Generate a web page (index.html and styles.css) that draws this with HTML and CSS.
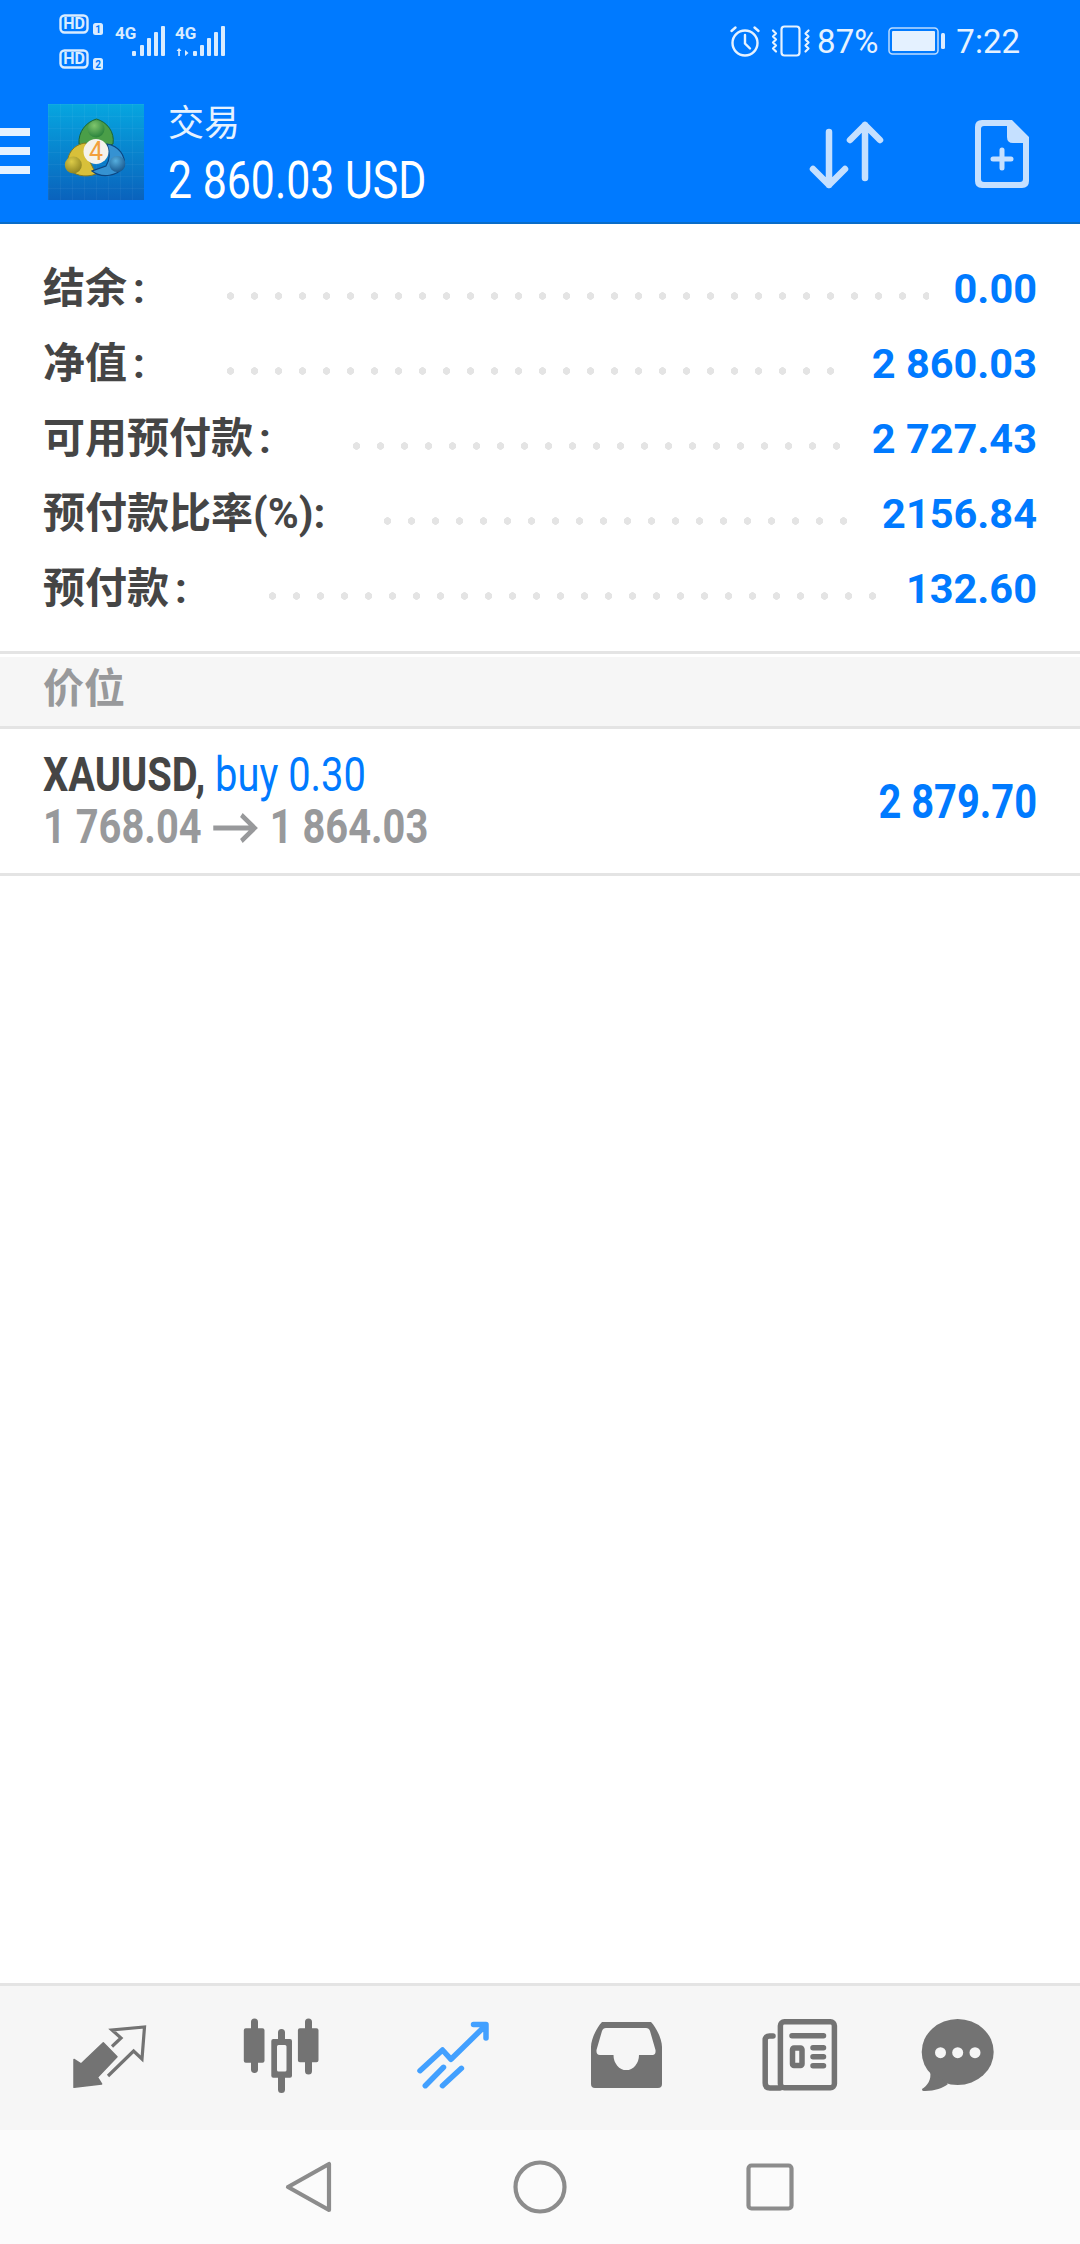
FILE: index.html
```html
<!DOCTYPE html>
<html lang="zh-CN">
<head>
    <meta charset="UTF-8">
    <meta name="viewport" content="width=device-width, initial-scale=1.0">
    <title>交易</title>
    <link rel="stylesheet" href="styles.css">
</head>
<body>

<header class="top">
    <div class="status">
        <svg class="status-left" viewBox="0 0 240 72" width="240" height="72">
            <g fill="none" stroke="#d9ecff" stroke-width="2.4">
                <rect x="60.5" y="15.5" width="27" height="17" rx="4"/>
                <rect x="60.5" y="50.5" width="27" height="17" rx="4"/>
            </g>
            <g fill="#d9ecff">
                <text class="hd" x="74" y="29" text-anchor="middle">HD</text>
                <text class="hd" x="74" y="64" text-anchor="middle">HD</text>
                <rect x="93" y="23" width="10" height="12" rx="2.5"/>
                <rect x="93" y="58" width="10" height="12" rx="2.5"/>
                <text class="net" x="115" y="39">4G</text>
                <text class="net" x="175" y="39">4G</text>
                <rect x="132" y="51" width="4" height="5" rx="1"/>
                <rect x="140" y="45" width="4" height="11" rx="1"/>
                <rect x="147" y="38" width="4" height="18" rx="1"/>
                <rect x="154" y="32" width="4" height="24" rx="1"/>
                <rect x="161" y="26" width="4" height="30" rx="1"/>
                <path d="M179 48l-2.500 3h1.700v5h1.700v-5h1.600zM185 56l3.500-3-3.500-3z"/>
                <rect x="193" y="51" width="4" height="5" rx="1"/>
                <rect x="200" y="45" width="4" height="11" rx="1"/>
                <rect x="207" y="38" width="4" height="18" rx="1"/>
                <rect x="214" y="32" width="4" height="24" rx="1"/>
                <rect x="221" y="26" width="4" height="30" rx="1"/>
            </g>
            <g fill="#007aff">
                <text class="sim" x="98" y="33" text-anchor="middle">1</text>
                <text class="sim" x="98" y="68" text-anchor="middle">2</text>
            </g>
        </svg>
        <div class="status-right">
            <svg viewBox="0 0 32 32" width="32" height="32" fill="none" stroke="#e6f2ff" stroke-width="2.400" stroke-linecap="round">
                <circle cx="16" cy="18" r="12.500"/>
                <path d="M16 10v8.500l5 5M2.500 6l4-3.500M29.500 6l-4-3.500"/>
            </svg>
            <svg class="vib" viewBox="0 0 42 32" width="42" height="32" fill="none" stroke="#e6f2ff" stroke-width="2.200" stroke-linecap="round" stroke-linejoin="round">
                <rect x="11.500" y="1.500" width="18" height="29" rx="3"/>
                <path d="M3 5.500l3 3-3 3 3 3-3 3 3 3-3 3 3 3M38.500 5.500l-3 3 3 3-3 3 3 3-3 3 3 3-3 3"/>
            </svg>
            <span class="pct">87%</span>
            <svg class="batt" viewBox="0 0 58 28" width="58" height="28">
                <rect x="1" y="1" width="49" height="26" rx="3.500" fill="none" stroke="#bcdcff" stroke-width="1.500"/>
                <rect x="4" y="4" width="43" height="20" rx="1" fill="#e4f1ff"/>
                <rect x="53" y="6" width="4" height="16" rx="1.500" fill="#dcecff"/>
            </svg>
            <span class="clock">7:22</span>
        </div>
    </div>
    <div class="appbar">
        <div class="burger"><i></i><i></i><i></i></div>
        <svg class="logo" viewBox="0 0 96 96" width="96" height="96">
            <defs>
                <linearGradient id="sky" x1="0" y1="0" x2="0" y2="1">
                    <stop offset="0" stop-color="#06a6e0"/>
                    <stop offset="1" stop-color="#0a62bc"/>
                </linearGradient>
                <pattern id="mesh" width="12" height="12" patternUnits="userSpaceOnUse">
                    <path d="M12 0H0V12" fill="none" stroke="#ffffff" stroke-opacity=".08"/>
                </pattern>
                <radialGradient id="bulbGreen" cx=".4" cy=".3" r=".8">
                    <stop offset="0" stop-color="#7fc56c"/>
                    <stop offset="1" stop-color="#1f7a36"/>
                </radialGradient>
                <radialGradient id="bulbYellow" cx=".4" cy=".3" r=".8">
                    <stop offset="0" stop-color="#dccb48"/>
                    <stop offset="1" stop-color="#877c1c"/>
                </radialGradient>
                <radialGradient id="bulbBlue" cx=".4" cy=".3" r=".8">
                    <stop offset="0" stop-color="#56aede"/>
                    <stop offset="1" stop-color="#124f86"/>
                </radialGradient>
            </defs>
            <rect width="96" height="96" fill="url(#sky)"/>
            <rect width="96" height="96" fill="url(#mesh)"/>
            <path d="M31 40C30 28 38 18 48.500 15 59 18 67 28 65 40L48 46Z" fill="#4a9e48" stroke="#1b6535" stroke-width="1"/>
            <circle cx="48" cy="25" r="8.500" fill="url(#bulbGreen)"/>
            <path d="M38 39C26 40 18 50 20 62 24 72 38 74 48 70L42 58Z" fill="#d8c03a" stroke="#85791e" stroke-width="1"/>
            <circle cx="25.300" cy="61" r="8.500" fill="url(#bulbYellow)"/>
            <path d="M59 40C71 42 78 52 76 62 70 72 54 75 44 67L58 62C62 56 62 48 59 40Z" fill="#3592d2" stroke="#0c4580" stroke-width="1.200"/>
            <circle cx="69.300" cy="60" r="8" fill="url(#bulbBlue)"/>
            <circle cx="48" cy="47.500" r="12.500" fill="#f4f2ec"/>
            <text class="logo-num" x="48" y="56" text-anchor="middle">4</text>
        </svg>
        <div class="title">
            <div class="title-name">交易</div>
            <div class="title-sum"><span class="squeeze">2 860.03 USD</span></div>
        </div>
        <svg class="swap" viewBox="0 0 70 68" width="70" height="68" fill="none" stroke="#c5e0ff" stroke-width="6.500" stroke-linecap="round" stroke-linejoin="round">
            <path d="M21 11v53M5 48l16 16 16-16M57 4v53M42 19L57 4l15 15" transform="translate(-2 0)"/>
        </svg>
        <svg class="addfile" viewBox="0 0 54 68" width="54" height="68">
            <path fill="#c5e0ff" fill-rule="evenodd" d="M7 0H37L54 17V61Q54 68 47 68H7Q0 68 0 61V7Q0 0 7 0ZM9 6Q6 6 6 9V59Q6 62 9 62H45Q48 62 48 59V23H38Q32 23 32 17V6Z"/>
            <path d="M27 30V48M18 39H36" stroke="#c5e0ff" stroke-width="5" stroke-linecap="round"/>
        </svg>
    </div>
</header>

<main class="content">
    <section class="summary">
        <div class="row"><span class="label w-short">结余<i class="colon">:</i></span><span class="dots"></span><span class="value">0.00</span></div>
        <div class="row"><span class="label w-short">净值<i class="colon">:</i></span><span class="dots"></span><span class="value">2 860.03</span></div>
        <div class="row"><span class="label w-long">可用预付款<i class="colon">:</i></span><span class="dots"></span><span class="value">2 727.43</span></div>
        <div class="row"><span class="label w-max">预付款比率(%):</span><span class="dots"></span><span class="value">2156.84</span></div>
        <div class="row"><span class="label w-mid">预付款<i class="colon">:</i></span><span class="dots"></span><span class="value">132.60</span></div>
    </section>

    <h2 class="section-head">价位</h2>

    <div class="position">
        <div class="pos-left">
            <div class="pos-line"><span class="squeeze narrow"><b class="symbol">XAUUSD,</b> <span class="side">buy 0.30</span></span></div>
            <div class="pos-line"><span class="squeeze narrow prices">1 768.04<svg class="arrow" viewBox="0 0 54 30" width="54" height="30" fill="none" stroke="#98999b" stroke-width="5"><path d="M0 15H50M34 2L50 15 34 28"/></svg>1 864.03</span></div>
        </div>
        <div class="profit"><span class="squeeze narrow right">2 879.70</span></div>
    </div>
</main>

<nav class="tabs">
    <div class="tab">
        <svg viewBox="0 0 80 80" width="80" height="80">
            <path fill="#737373" stroke="#737373" stroke-width="1.500" stroke-linejoin="round" d="M4 44.500L11 49 33.300 27.700 47 41.700 27.500 62.300 31.600 69 4 72.300Z"/>
            <path fill="none" stroke="#737373" stroke-width="3.200" d="M42 31.500L51 23 42 15 74.500 12 72 44 63.600 36 38 61"/>
        </svg>
    </div>
    <div class="tab">
        <svg viewBox="0 0 80 80" width="80" height="80">
            <path fill="#737373" fill-rule="evenodd" d="M3.800 13.300H9V7a3.300 3.300 0 0 1 7 0V13.300H20.500a2 2 0 0 1 2 2V45.700a2 2 0 0 1-2 2H16V54.500a3.300 3.300 0 0 1-7 0V47.700H3.800a2 2 0 0 1-2-2V15.300a2 2 0 0 1 2-2Z"/>
            <path fill="#737373" fill-rule="evenodd" d="M31.300 24H36V17.500a3.300 3.300 0 0 1 7 0V24H48a2 2 0 0 1 2 2V60.700a2 2 0 0 1-2 2H43V74.500a3.300 3.300 0 0 1-7 0V62.700H31.300a2 2 0 0 1-2-2V26a2 2 0 0 1 2-2ZM36.500 30a1.500 1.500 0 0 0-1.500 1.500V55a1.500 1.500 0 0 0 1.500 1.500H43a1.500 1.500 0 0 0 1.500-1.500V31.500A1.500 1.500 0 0 0 43 30Z"/>
            <path fill="#737373" d="M57.900 13.300H63V7a3.300 3.300 0 0 1 7 0V13.300H74.500a2 2 0 0 1 2 2V45.300a2 2 0 0 1-2 2H70V56a3.300 3.300 0 0 1-7 0V47.300H57.900a2 2 0 0 1-2-2V15.300a2 2 0 0 1 2-2Z"/>
        </svg>
    </div>
    <div class="tab">
        <svg viewBox="0 0 80 80" width="80" height="80" fill="none" stroke="#42a0ff" stroke-width="5.500" stroke-linecap="round" stroke-linejoin="round">
            <path d="M6 55.700L28.500 35 37 44.300 70 12M59.500 9.500H72V23"/>
            <path d="M11.300 70.700L29.500 52.300M28.500 70.700L47.400 53.300"/>
        </svg>
    </div>
    <div class="tab">
        <svg viewBox="0 0 80 80" width="80" height="80">
            <path fill="#737373" fill-rule="evenodd" d="M16 7H65C70 12 76 24 76 32V69Q76 73 72 73H9Q5 73 5 69V32C5 24 11 12 16 7ZM20 13Q17 13 16 16L10.500 35Q10 40 14 40H27.500A12.700 15 0 0 0 53 40H66.500Q70 40 69.500 35L64 16Q63 13 60 13Z"/>
        </svg>
    </div>
    <div class="tab">
        <svg viewBox="0 0 80 80" width="80" height="80" fill="none" stroke="#737373" stroke-width="5.500" stroke-linecap="round">
            <rect x="22.400" y="6.800" width="54" height="66" rx="4"/>
            <path d="M15 21H11.500Q7.200 21 7.200 25V68Q7.200 73 12 73H22M34 20.700H65.500M55 32.700H65.500M55 41.700H65.500M55 50.700H65.500"/>
            <rect x="34.500" y="33" width="9.500" height="17.500" rx="1.500"/>
        </svg>
    </div>
    <div class="tab tab-last">
        <svg viewBox="0 0 80 80" width="80" height="80">
            <ellipse cx="40.700" cy="37" rx="36" ry="33" fill="#737373"/>
            <path fill="#737373" d="M13 56C15 65 10 71 5 74 5 76 6 76 8 76 18 76 26 73 31 69Z"/>
            <g fill="#f6f6f6">
                <circle cx="23.500" cy="37.700" r="5.500"/>
                <circle cx="40.700" cy="37.700" r="5.500"/>
                <circle cx="58" cy="37.700" r="5.500"/>
            </g>
        </svg>
    </div>
</nav>

<div class="softkeys">
    <svg viewBox="0 0 48 54" width="48" height="54" fill="none" stroke="#8c8c8c" stroke-width="4.200" stroke-linejoin="round">
        <path d="M44 4V50L3 27Z"/>
    </svg>
    <svg viewBox="0 0 54 54" width="54" height="54" fill="none" stroke="#8c8c8c" stroke-width="4.200">
        <circle cx="27" cy="27" r="24.500"/>
    </svg>
    <svg viewBox="0 0 48 48" width="48" height="48" fill="none" stroke="#8c8c8c" stroke-width="4.200">
        <rect x="2.500" y="2.500" width="43" height="43" rx="3"/>
    </svg>
</div>

</body>
</html>
```

FILE: styles.css
```css
body {
    font-family: Roboto, "Noto Sans CJK SC", sans-serif;
    display: flex;
    flex-direction: column;
    width: 1080px;
    height: 2244px;
    margin: 0;
    background-color: #fff;
    overflow: hidden;
}

.top {
    flex: none;
    height: 222px;
    background-color: #007aff;
    border-bottom: 2px solid #0a6cc8;
}

.status {
    display: flex;
    justify-content: space-between;
    height: 72px;
    color: #e6f2ff;
}

.status-left {
    display: block;
}

.status-left .hd {
    font-size: 16px;
    font-weight: 700;
}

.status-left .net {
    font-size: 17px;
    font-weight: 700;
}

.status-left .sim {
    font-size: 10px;
    font-weight: 700;
}

.status-right {
    display: flex;
    align-items: center;
    padding: 10px 60px 0 0;
    font-size: 33px;
    box-sizing: border-box;
    height: 72px;
}

.vib {
    margin-left: 9px;
}

.pct {
    margin-left: 5px;
}

.batt {
    margin-left: 10px;
}

.clock {
    margin-left: 10px;
}

.appbar {
    display: flex;
    align-items: center;
    height: 150px;
}

.burger {
    display: flex;
    flex-direction: column;
    gap: 11px;
    width: 30px;
    margin-top: 8px;
}

.burger i {
    display: block;
    height: 8px;
    background-color: #e6f2ff;
}

.logo {
    margin: 10px 0 0 18px;
}

.title {
    width: 0;
    flex: 1;
    margin: 18px 0 0 24px;
    color: #fff;
}

.title-name {
    font-size: 36px;
    line-height: 50px;
    color: #e6f2ff;
}

.title-sum {
    font-size: 51px;
    line-height: 64px;
    white-space: nowrap;
}

.squeeze {
    display: inline-block;
    white-space: nowrap;
    transform: scaleX(.84);
    transform-origin: 0 50%;
}

.squeeze.narrow {
    transform: scaleX(.83);
}

.squeeze.right {
    transform-origin: 100% 50%;
}

.swap {
    overflow: visible;
    margin: 16px 95px 0 0;
}

.addfile {
    margin: 14px 51px 0 0;
}

.content {
    flex: 1;
}

.summary {
    padding: 26px 0;
}

.row {
    display: flex;
    height: 75px;
    align-items: center;
    padding: 0 43px;
}

.label {
    flex: none;
    position: relative;
    top: -3px;
    font-size: 42px;
    font-weight: 700;
    color: #454545;
    white-space: nowrap;
}

.colon {
    margin-left: 6px;
    font-style: normal;
}

.w-short {
    width: 184px;
}

.w-mid {
    width: 226px;
}

.w-long {
    width: 310px;
}

.w-max {
    width: 341px;
}

.dots {
    flex: 1;
    align-self: stretch;
    margin-right: 25px;
    background-image: radial-gradient(circle at 3.500px 46px, #e4e4e4 3.500px, transparent 4px);
    background-size: 24px 75px;
    background-repeat: repeat-x;
}

.value {
    position: relative;
    top: 1px;
    font-size: 41.500px;
    font-weight: 700;
    color: #007aff;
    white-space: nowrap;
}

.section-head {
    height: 72px;
    margin: 0;
    padding-left: 43px;
    border-top: 3px solid #e4e4e4;
    border-bottom: 3px solid #e4e4e4;
    box-shadow: inset 0 3px 0 #fff;
    background-color: #f6f6f6;
    font-size: 41px;
    line-height: 70px;
    font-weight: 700;
    color: #98999b;
}

.position {
    display: flex;
    justify-content: space-between;
    align-items: center;
    height: 144px;
    padding: 0 43px;
    border-bottom: 3px solid #e4e4e4;
}

.pos-line {
    font-size: 48px;
    line-height: 52px;
}

.symbol {
    color: #454545;
}

.side {
    color: #007aff;
}

.prices {
    font-weight: 700;
    color: #98999b;
}

.arrow {
    margin: 0 14px;
}

.profit {
    font-size: 48px;
    font-weight: 700;
    color: #007aff;
}

.tabs {
    flex: none;
    display: flex;
    box-sizing: border-box;
    height: 147px;
    padding: 29px 0 0 24px;
    border-top: 3px solid #e4e4e4;
    background-color: #f6f6f6;
}

.tab {
    display: flex;
    justify-content: center;
    width: 172px;
}

.tab svg {
    overflow: visible;
}

.tab-last {
    width: 146px;
}

.softkeys {
    flex: none;
    display: flex;
    align-items: center;
    height: 114px;
    padding-left: 285px;
    background-color: #fbfbfb;
}

.softkeys svg:nth-child(2) {
    margin-left: 180px;
}

.softkeys svg:nth-child(3) {
    margin-left: 179px;
}

.logo-num {
    font-size: 25px;
    fill: #f2a03d;
}
```
